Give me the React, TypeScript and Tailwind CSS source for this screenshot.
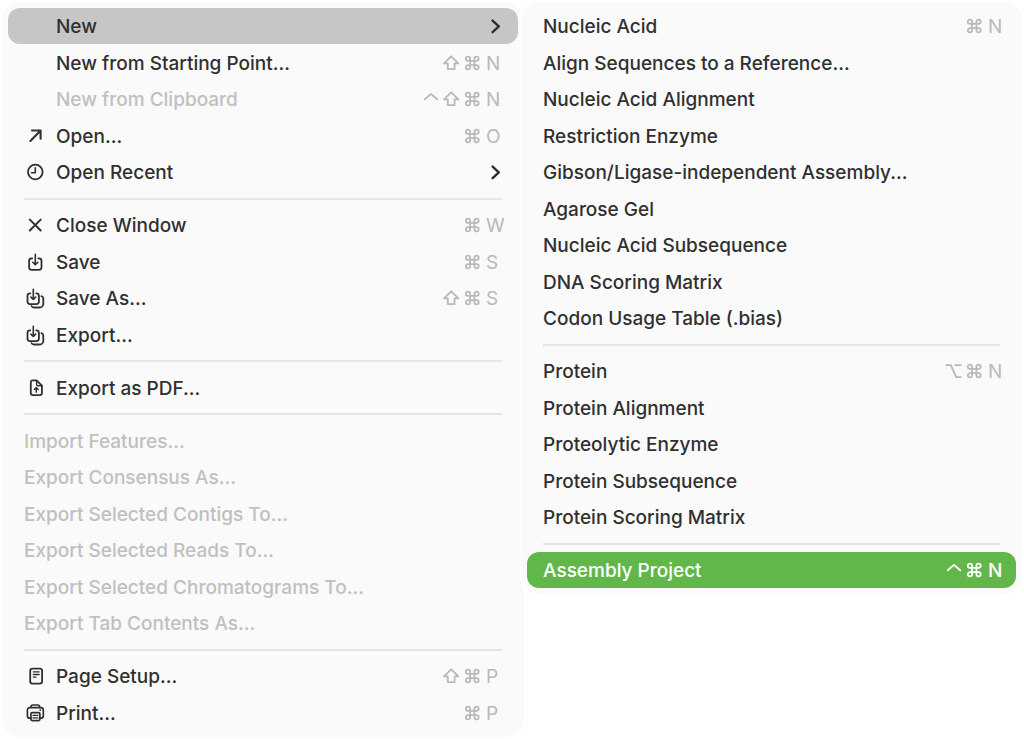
import type { ReactNode } from 'react';
import clsx from 'clsx';

type Modifier = 'ctrl' | 'option' | 'shift' | 'cmd';

interface MenuEntry {
  label: string;
  icon?: ReactNode;
  mods?: Modifier[];
  letter?: string;
  submenu?: boolean;
  disabled?: boolean;
  flush?: boolean;
  highlight?: 'gray' | 'green';
}

type MenuRow = MenuEntry | 'separator';

const MODIFIER_PATHS: Record<Modifier, string> = {
  ctrl: 'M1.8 10.3 8 4.9l6.2 5.4',
  option: 'M.4 4.2h4.4l5.5 12h4.5M9.4 4.2h5.4',
  shift: 'M7.2 3.3 14.4 10.4h-3.8v5.7H3.8v-5.7H0z',
  cmd: 'M9.4 5.7v8.6a2.15 2.15 0 1 0 2.15-2.15h-8.6a2.15 2.15 0 1 0 2.15 2.15V5.7a2.15 2.15 0 1 0-2.15 2.15h8.6A2.15 2.15 0 1 0 9.4 5.7',
};

const ModifierKey = ({ name }: { name: Modifier }) => (
  <svg
    viewBox="0 0 21 20"
    className="h-5 w-[21px] shrink-0 overflow-visible"
    fill="none"
    stroke="currentColor"
    strokeWidth="1.8"
    strokeLinecap="round"
    strokeLinejoin="round"
    aria-hidden="true"
  >
    <path d={MODIFIER_PATHS[name]} />
  </svg>
);

const Glyph = ({ children, width = 1.8 }: { children: ReactNode; width?: number }) => (
  <svg
    viewBox="0 0 22 22"
    className="size-full"
    fill="none"
    stroke="currentColor"
    strokeWidth={width}
    strokeLinecap="round"
    strokeLinejoin="round"
    aria-hidden="true"
  >
    {children}
  </svg>
);

const OpenIcon = (
  <Glyph width={2.1}>
    <path d="M6.4 15.9 16.4 5.7M8 5.5h8.6v8.3" />
  </Glyph>
);

const RecentIcon = (
  <Glyph>
    <circle cx="11.3" cy="11" r="7.3" />
    <path d="M11.3 6.8v4.9H7.6" strokeWidth="1.6" />
  </Glyph>
);

const CloseIcon = (
  <Glyph width={2}>
    <path d="M5.8 5.6 16.7 16.5M16.7 5.6 5.8 16.5" />
  </Glyph>
);

const SaveIcon = (
  <Glyph>
    <path d="M8.2 7.4h-.6a2.5 2.5 0 0 0-2.5 2.5v6.4a2.5 2.5 0 0 0 2.5 2.5H15a2.5 2.5 0 0 0 2.5-2.5V9.9A2.5 2.5 0 0 0 15 7.4h-.6" />
    <path d="M11.3 3.4v10.2M8.8 11.3l2.5 2.5 2.5-2.5" strokeWidth="1.6" />
  </Glyph>
);

const SaveAsIcon = (
  <Glyph>
    <path d="M6.3 6.3H6a2.5 2.5 0 0 0-2.5 2.5v5.8A2.5 2.5 0 0 0 6 17.1h6.4a2.5 2.5 0 0 0 2.5-2.5V8.8a2.5 2.5 0 0 0-2.5-2.5h-.2" />
    <path d="M9.3 2.4v10M6.9 10.1l2.4 2.4 2.4-2.4" strokeWidth="1.6" />
    <path d="M17.4 9.2c1.2.3 1.9 1.2 1.9 2.4v5.3a3.6 3.6 0 0 1-3.6 3.6H10c-1.2 0-2.1-.6-2.5-1.5" />
  </Glyph>
);

const PdfIcon = (
  <Glyph>
    <path d="M12.6 3.4H8.8a2 2 0 0 0-2 2v10.7a2 2 0 0 0 2 2h7.1a2 2 0 0 0 2-2V8.7z" />
    <path d="M12.6 3.6v3.9a1.2 1.2 0 0 0 1.2 1.2h4" strokeWidth="1.4" />
    <path d="M12.3 15.3v-4.6M10.4 12.4l1.9-1.9 1.9 1.9" strokeWidth="1.4" />
  </Glyph>
);

const PageIcon = (
  <Glyph>
    <rect x="6.2" y="3.6" width="11.9" height="15" rx="2.3" />
    <path d="M9.3 6.9h5.9M9.3 9.5h5.9M9.3 12.1h2.7" strokeWidth="1.3" />
  </Glyph>
);

const PrintIcon = (
  <Glyph width={1.7}>
    <path d="M6.9 5.5v-.6A1.9 1.9 0 0 1 8.8 3h5a1.9 1.9 0 0 1 1.9 1.9v.6" />
    <path d="M6.8 16.2h-.9a2.5 2.5 0 0 1-2.5-2.5V8.1a2.5 2.5 0 0 1 2.5-2.5h10.9a2.5 2.5 0 0 1 2.5 2.5v5.6a2.5 2.5 0 0 1-2.5 2.5h-.9" />
    <rect x="6.9" y="10.7" width="9" height="7.9" rx="1.3" />
    <path d="M9 13.4h4.9M9 15.9h4.9" strokeWidth="1.3" />
    <circle cx="16.3" cy="8.2" r=".9" fill="currentColor" stroke="none" />
  </Glyph>
);

const FILE_MENU: MenuRow[] = [
  { label: 'New', submenu: true, highlight: 'gray' },
  { label: 'New from Starting Point...', mods: ['shift', 'cmd'], letter: 'N' },
  { label: 'New from Clipboard', mods: ['ctrl', 'shift', 'cmd'], letter: 'N', disabled: true },
  { label: 'Open...', icon: OpenIcon, mods: ['cmd'], letter: 'O' },
  { label: 'Open Recent', icon: RecentIcon, submenu: true },
  'separator',
  { label: 'Close Window', icon: CloseIcon, mods: ['cmd'], letter: 'W' },
  { label: 'Save', icon: SaveIcon, mods: ['cmd'], letter: 'S' },
  { label: 'Save As...', icon: SaveAsIcon, mods: ['shift', 'cmd'], letter: 'S' },
  { label: 'Export...', icon: SaveAsIcon },
  'separator',
  { label: 'Export as PDF...', icon: PdfIcon },
  'separator',
  { label: 'Import Features...', disabled: true, flush: true },
  { label: 'Export Consensus As...', disabled: true, flush: true },
  { label: 'Export Selected Contigs To...', disabled: true, flush: true },
  { label: 'Export Selected Reads To...', disabled: true, flush: true },
  { label: 'Export Selected Chromatograms To...', disabled: true, flush: true },
  { label: 'Export Tab Contents As...', disabled: true, flush: true },
  'separator',
  { label: 'Page Setup...', icon: PageIcon, mods: ['shift', 'cmd'], letter: 'P' },
  { label: 'Print...', icon: PrintIcon, mods: ['cmd'], letter: 'P' },
];

const NEW_MENU: MenuRow[] = [
  { label: 'Nucleic Acid', mods: ['cmd'], letter: 'N', flush: true },
  { label: 'Align Sequences to a Reference...', flush: true },
  { label: 'Nucleic Acid Alignment', flush: true },
  { label: 'Restriction Enzyme', flush: true },
  { label: 'Gibson/Ligase-independent Assembly...', flush: true },
  { label: 'Agarose Gel', flush: true },
  { label: 'Nucleic Acid Subsequence', flush: true },
  { label: 'DNA Scoring Matrix', flush: true },
  { label: 'Codon Usage Table (.bias)', flush: true },
  'separator',
  { label: 'Protein', mods: ['option', 'cmd'], letter: 'N', flush: true },
  { label: 'Protein Alignment', flush: true },
  { label: 'Proteolytic Enzyme', flush: true },
  { label: 'Protein Subsequence', flush: true },
  { label: 'Protein Scoring Matrix', flush: true },
  'separator',
  { label: 'Assembly Project', mods: ['ctrl', 'cmd'], letter: 'N', flush: true, highlight: 'green' },
];

const MenuItem = ({ item, letterClass }: { item: MenuEntry; letterClass: string }) => (
  <li role="none" className="h-9 even:h-[37px]">
    <button
      type="button"
      role="menuitem"
      disabled={item.disabled}
      aria-haspopup={item.submenu ? 'menu' : undefined}
      className={clsx(
        'flex h-full w-full items-center rounded-xl px-4 text-left',
        item.disabled && 'text-[#c0c0c0]',
        item.highlight === 'gray' && 'bg-[#c6c6c6]',
        item.highlight === 'green' && 'bg-[#62b74a] text-white',
      )}
    >
      {!item.flush && <span className="mr-2.5 size-[22px] shrink-0">{item.icon}</span>}
      <span className="grow pt-0.5 whitespace-nowrap">{item.label}</span>
      {item.submenu && (
        <svg
          viewBox="0 0 12 16"
          className="h-4 w-3"
          fill="none"
          stroke="currentColor"
          strokeWidth="2.5"
          strokeLinecap="round"
          strokeLinejoin="round"
          aria-hidden="true"
        >
          <path d="M2.6 2.7 8.8 8.4l-6.2 5.7" />
        </svg>
      )}
      {item.mods && (
        <span
          className={clsx(
            'flex shrink-0 items-center',
            item.highlight === 'green' ? 'font-medium' : 'font-normal text-[#b9b9b9]',
          )}
        >
          {item.mods.map((mod) => (
            <ModifierKey key={mod} name={mod} />
          ))}
          <span className={clsx('pt-0.5', letterClass)}>{item.letter}</span>
        </span>
      )}
    </button>
  </li>
);

const Menu = ({
  label,
  rows,
  className,
  letterClass,
}: {
  label: string;
  rows: MenuRow[];
  className: string;
  letterClass: string;
}) => (
  <ul role="menu" aria-label={label} className={clsx('rounded-[18px] bg-[#fafafa] p-1.5', className)}>
    {rows.map((row, i) =>
      row === 'separator' ? (
        <li key={i} role="separator" className="flex h-[17px] items-center px-4 odd:h-4">
          <span className="h-0.5 grow bg-[#e5e5e5]" />
        </li>
      ) : (
        <MenuItem key={i} item={row} letterClass={letterClass} />
      ),
    )}
  </ul>
);

export default function App() {
  return (
    <main className="flex items-start bg-white p-0.5 font-['Inter',sans-serif] text-[19px] leading-6 font-medium text-[#303030]">
      <Menu label="File" rows={FILE_MENU} className="grow basis-[522px]" letterClass="w-4" />
      <Menu
        label="New"
        rows={NEW_MENU}
        className="relative -ml-[3px] grow basis-[501px] ring-1 ring-white"
        letterClass="w-3"
      />
    </main>
  );
}
